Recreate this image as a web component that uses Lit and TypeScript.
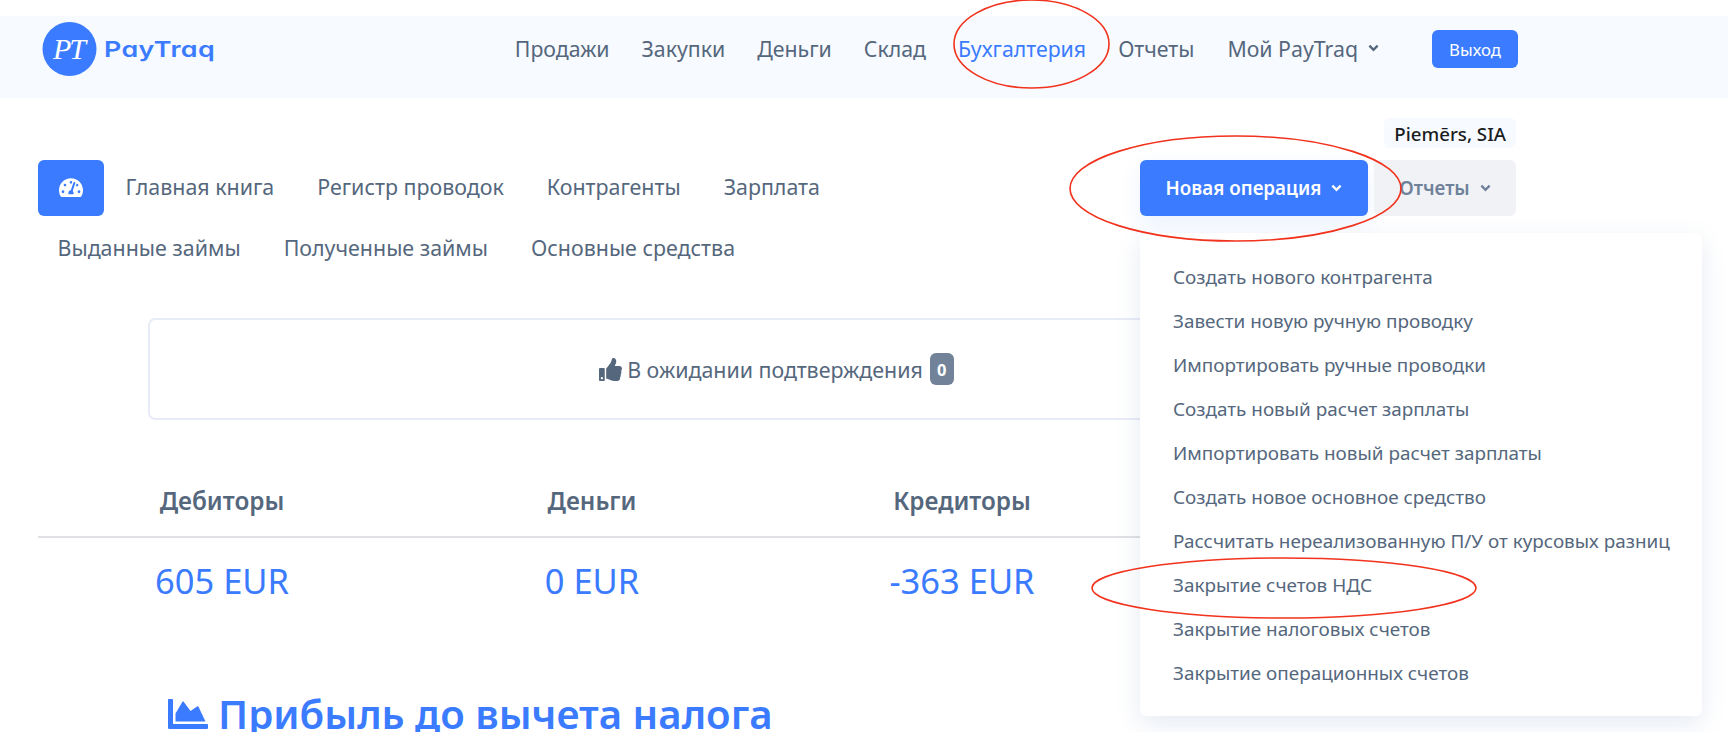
import { LitElement, html, css, svg } from 'lit';
import { customElement } from 'lit/decorators.js';
import { classMap } from 'lit/directives/class-map.js';

const chevron = (cls: string) => html`<svg class="${cls}" viewBox="0 0 12 8" width="11" height="8">
  <path d="M1.5 1.5 6 6l4.5-4.5" fill="none" stroke="currentColor" stroke-width="2.6" />
</svg>`;

const gauge = svg`<path d="M288 32C128.94 32 0 160.94 0 320c0 52.8 14.25 102.26 39.06 144.8 5.61 9.62 16.3 15.2 27.44 15.2h443c11.14 0 21.83-5.58 27.44-15.2C561.75 422.26 576 372.8 576 320c0-159.06-128.94-288-288-288zm0 64c14.71 0 26.58 10.13 30.32 23.65-1.11 2.26-2.64 4.23-3.45 6.67l-9.22 27.67c-5.13 3.49-10.97 6.01-17.64 6.01-17.67 0-32-14.33-32-32S270.33 96 288 96zM96 384c-17.67 0-32-14.33-32-32s14.33-32 32-32 32 14.33 32 32-14.33 32-32 32zm48-160c-17.67 0-32-14.33-32-32s14.33-32 32-32 32 14.33 32 32-14.33 32-32 32zm246.77-72.41l-61.33 184C343.13 347.33 352 364.54 352 384c0 11.72-3.38 22.55-8.88 32H232.88c-5.5-9.45-8.88-20.28-8.88-32 0-33.94 26.5-61.43 59.9-63.59l61.34-184.01c4.17-12.56 17.73-19.45 30.36-15.17 12.57 4.19 19.35 17.79 15.17 30.36zm14.66 57.2l15.52-46.55c3.47-1.29 7.13-2.23 11.05-2.23 17.67 0 32 14.33 32 32s-14.33 32-32 32c-11.38-.01-20.89-6.28-26.57-15.22zM480 384c-17.67 0-32-14.33-32-32s14.33-32 32-32 32 14.33 32 32-14.33 32-32 32z"/>`;

const thumb = svg`<path d="M104 224H24c-13.255 0-24 10.745-24 24v240c0 13.255 10.745 24 24 24h80c13.255 0 24-10.745 24-24V248c0-13.255-10.745-24-24-24zM64 472c-13.255 0-24-10.745-24-24s10.745-24 24-24 24 10.745 24 24-10.745 24-24 24zM384 81.452c0 42.416-25.97 66.208-33.277 94.548h101.723c33.397 0 59.397 27.746 59.553 58.098.084 17.938-7.546 37.249-19.439 49.197l-.11.11c9.836 23.337 8.237 56.037-9.308 79.469 8.681 25.895-.069 57.704-16.382 74.757 4.298 17.598 2.244 32.575-6.148 44.632C440.202 511.587 389.616 512 346.839 512l-2.845-.001c-48.287-.017-87.806-17.598-119.56-31.725-15.957-7.099-36.821-15.887-52.651-16.178-6.54-.12-11.783-5.457-11.783-11.998v-213.77c0-3.2 1.282-6.271 3.558-8.521 39.614-39.144 56.648-80.587 89.117-113.111 14.804-14.832 20.188-37.236 25.393-58.902C282.515 39.293 291.817 0 312 0c24 0 72 8 72 81.452z"/>`;

const chartArea = svg`<path d="M500 384c6.6 0 12 5.4 12 12v40c0 6.6-5.4 12-12 12H12c-6.6 0-12-5.4-12-12V76c0-6.6 5.4-12 12-12h40c6.6 0 12 5.4 12 12v308h436zM372.7 159.5L288 216l-85.3-113.7c-5.1-6.8-15.5-6.3-19.9 1L96 248v104h384l-89.9-187.8c-3.2-6.5-11.4-8.7-17.4-4.7z"/>`;

const NAV = ['Продажи', 'Закупки', 'Деньги', 'Склад', 'Бухгалтерия', 'Отчеты'];
const TABS_TOP = ['Главная книга', 'Регистр проводок', 'Контрагенты', 'Зарплата'];
const TABS_BOTTOM = ['Выданные займы', 'Полученные займы', 'Основные средства'];
const MENU = [
  'Создать нового контрагента',
  'Завести новую ручную проводку',
  'Импортировать ручные проводки',
  'Создать новый расчет зарплаты',
  'Импортировать новый расчет зарплаты',
  'Создать новое основное средство',
  'Рассчитать нереализованную П/У от курсовых разниц',
  'Закрытие счетов НДС',
  'Закрытие налоговых счетов',
  'Закрытие операционных счетов',
];
const TOTALS = [
  { label: 'Дебиторы', value: '605 EUR' },
  { label: 'Деньги', value: '0 EUR' },
  { label: 'Кредиторы', value: '-363 EUR' },
  { label: '', value: '' },
];

@customElement('app-root')
export class AppRoot extends LitElement {
  static styles = css`
    :host {
      display: block;
      position: relative;
      height: 732px;
      overflow: hidden;
      padding-top: 16px;
      box-sizing: border-box;
      background: #fff;
      color: #55677d;
      font-family: 'Noto Sans', 'Open Sans', sans-serif;
    }

    .topbar {
      display: flex;
      height: 82px;
      background: #f7faff;
      padding: 0 210px 0 42px;
      box-sizing: border-box;
    }

    .logo {
      display: flex;
      align-items: center;
      height: 54px;
      margin-top: 6px;
      gap: 7px;
    }

    .logo-mark {
      display: block;
    }

    .logo-mark text {
      font-family: 'Liberation Serif', serif;
      font-style: italic;
      font-size: 30px;
      letter-spacing: -2px;
      fill: #fff;
    }

    .logo-word {
      font-family: 'Inter', sans-serif;
      font-feature-settings: 'cv11';
      font-size: 22px;
      font-weight: 600;
      letter-spacing: 0.3px;
      color: #3a7bff;
      transform: scaleX(1.22);
      transform-origin: left center;
    }

    .topnav {
      display: flex;
      align-items: center;
      margin-left: auto;
      height: 64px;
      gap: 32px;
      font-size: 21.3px;
    }

    .topnav a.active {
      color: #3a7bff;
    }

    .topnav .mine {
      display: flex;
      align-items: center;
      gap: 10px;
      margin-left: 1px;
    }

    .logout {
      margin: 2px 0 0 21px;
      width: 86px;
      height: 38px;
      background: #3a7bff;
      color: #fff;
      border-radius: 6px;
      font-size: 16.8px;
      display: flex;
      align-items: center;
      justify-content: center;
    }

    main {
      padding: 20px 212px 0 38px;
    }

    .company {
      display: flex;
      justify-content: flex-end;
      height: 30px;
      margin-bottom: 12px;
    }

    .company span {
      display: flex;
      align-items: center;
      padding: 0 10px;
      background: #f7faff;
      border-radius: 6px;
      color: #1a1d21;
      font-size: 18.7px;
      font-weight: 500;
    }

    .toolbar {
      display: flex;
      justify-content: space-between;
      align-items: flex-start;
    }

    .tabs {
      font-size: 21.4px;
    }

    .tab-row {
      display: flex;
      height: 56px;
    }

    .tab-row.bottom {
      height: 64px;
      margin-left: -2px;
    }

    .dash {
      width: 66px;
      height: 56px;
      background: #3a7bff;
      border-radius: 6px;
      display: flex;
      align-items: center;
      justify-content: center;
    }

    .dash svg {
      width: 24px;
      fill: #fff;
    }

    .tab {
      padding: 0 21.5px;
      height: 52px;
      display: flex;
      align-items: center;
    }

    .bottom .tab {
      height: 62px;
    }

    .actions {
      position: relative;
      display: flex;
      gap: 6px;
    }

    .btn {
      height: 56px;
      border-radius: 6px;
      font-size: 18.8px;
      font-weight: 600;
      display: flex;
      align-items: center;
      justify-content: center;
      box-sizing: border-box;
    }

    .btn.primary {
      width: 228px;
      gap: 10px;
      background: #3a7bff;
      color: #fff;
      box-shadow: 0 8px 20px rgba(58, 123, 255, 0.1);
    }

    .btn.muted {
      width: 142px;
      gap: 10px;
      background: #f0f2f5;
      color: #6f819a;
    }

    .menu {
      position: absolute;
      top: 73px;
      left: 0;
      width: 562px;
      height: 483px;
      padding: 22px 0 0 33px;
      box-sizing: border-box;
      background: #fff;
      border-radius: 6px;
      box-shadow: 0 8px 24px rgba(80, 110, 170, 0.14);
      z-index: 2;
      font-size: 18.9px;
    }

    .menu a {
      display: flex;
      align-items: center;
      height: 44px;
      white-space: nowrap;
    }

    .pending {
      margin: 38px 0 0 110px;
      width: 1257px;
      height: 102px;
      box-sizing: border-box;
      border: 2px solid #e8ecf6;
      border-radius: 7px;
      display: flex;
      align-items: center;
      justify-content: center;
      gap: 5px;
      font-size: 21.4px;
    }

    .pending svg {
      width: 23px;
      fill: #55677d;
    }

    .pending .badge {
      background: #718299;
      color: #fff;
      width: 24px;
      height: 32px;
      border-radius: 6px;
      display: flex;
      align-items: center;
      justify-content: center;
      font-size: 16.5px;
      font-weight: 700;
      margin-left: 2px;
    }

    .totals {
      display: grid;
      grid-template-columns: repeat(4, 370px);
      margin-top: 61px;
    }

    .totals .head {
      height: 57px;
      box-sizing: border-box;
      border-bottom: 2px solid #dfe1e4;
      display: flex;
      justify-content: center;
      padding: 3px 2px 0 0;
      font-size: 24.3px;
      font-weight: 600;
    }

    .totals .val {
      display: flex;
      justify-content: center;
      padding: 19px 2px 0 0;
      font-size: 34.5px;
      color: #3a7bff;
    }

    .chart-row {
      display: flex;
      justify-content: space-between;
      margin-top: 84px;
    }

    h2 {
      margin: 0 0 0 130px;
      display: flex;
      align-items: center;
      gap: 10px;
      color: #3a7bff;
      font-size: 40.2px;
      font-weight: 600;
      line-height: 52px;
      white-space: nowrap;
    }

    h2 svg {
      width: 40px;
      fill: #3a7bff;
    }

    .scroller {
      margin: -18px -1px 0 0;
      width: 28px;
      height: 40px;
      box-sizing: border-box;
      border: solid #eceef2;
      border-width: 0 1px;
      display: flex;
      justify-content: center;
    }

    .scroller i {
      display: block;
      width: 16px;
      background: #c1c5cc;
    }

    .marks {
      position: absolute;
      top: 0;
      left: 0;
      z-index: 3;
      pointer-events: none;
    }

    .marks ellipse {
      fill: none;
      stroke: #f1321c;
      stroke-width: 1.6;
    }
  `;

  render() {
    return html`
      <header class="topbar">
        <div class="logo">
          <svg class="logo-mark" width="55" height="54" viewBox="0 0 55 54">
            <circle cx="27.5" cy="27" r="27" fill="#3a7bff" />
            <text x="11" y="37">PT</text>
          </svg>
          <span class="logo-word">PayTraq</span>
        </div>
        <nav class="topnav">
          ${NAV.map(
            (n) =>
              html`<a class=${classMap({ active: n === 'Бухгалтерия' })}>${n}</a>`
          )}
          <a class="mine">Мой PayTraq ${chevron('')}</a>
          <a class="logout">Выход</a>
        </nav>
      </header>

      <main>
        <div class="company"><span>Piemērs, SIA</span></div>
        <div class="toolbar">
          <div class="tabs">
            <div class="tab-row">
              <a class="dash"><svg viewBox="0 0 576 512">${gauge}</svg></a>
              ${TABS_TOP.map((t) => html`<a class="tab">${t}</a>`)}
            </div>
            <div class="tab-row bottom">
              ${TABS_BOTTOM.map((t) => html`<a class="tab">${t}</a>`)}
            </div>
          </div>
          <div class="actions">
            <div class="btn primary">Новая операция ${chevron('')}</div>
            <div class="btn muted">Отчеты ${chevron('')}</div>
            <div class="menu">${MENU.map((m) => html`<a>${m}</a>`)}</div>
          </div>
        </div>

        <div class="pending">
          <svg viewBox="0 0 512 512">${thumb}</svg>
          <span>В ожидании подтверждения</span>
          <span class="badge">0</span>
        </div>

        <div class="totals">
          ${TOTALS.map((t) => html`<div class="head">${t.label}</div>`)}
          ${TOTALS.map((t) => html`<div class="val">${t.value}</div>`)}
        </div>

        <div class="chart-row">
          <h2><svg viewBox="0 0 512 512">${chartArea}</svg>Прибыль до вычета налога</h2>
          <div class="scroller"><i></i></div>
        </div>
      </main>

      <svg class="marks" width="1728" height="732">
        <ellipse cx="1031.5" cy="44" rx="77.5" ry="44" />
        <ellipse cx="1235.5" cy="188.5" rx="165.5" ry="52.5" />
        <ellipse cx="1284" cy="588" rx="192" ry="30" />
      </svg>
    `;
  }
}
